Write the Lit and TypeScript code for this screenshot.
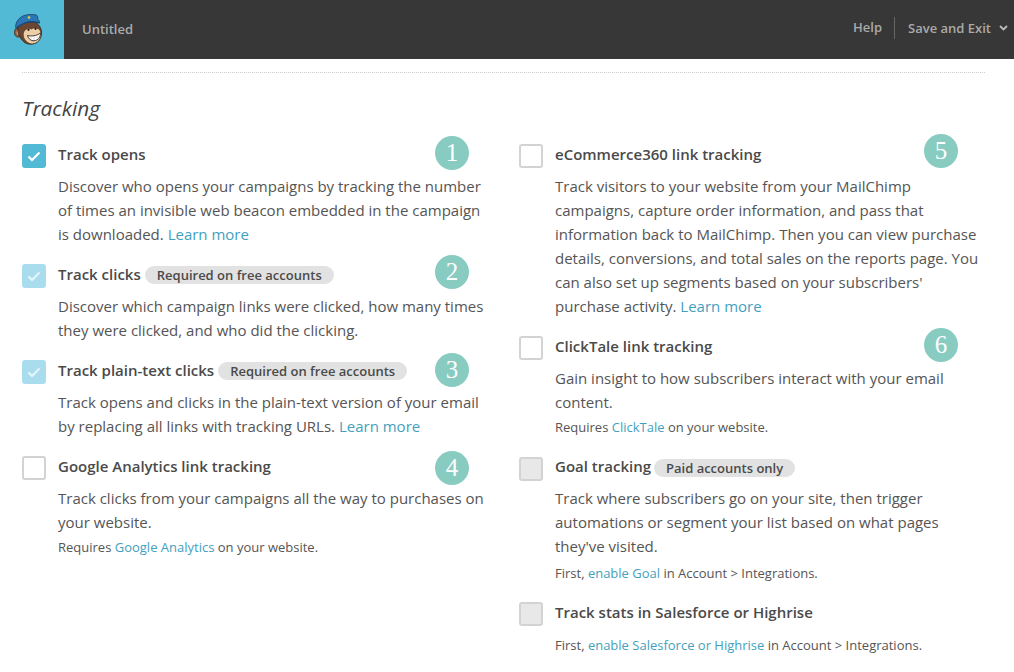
import { LitElement, html, css, svg } from "lit";
import { customElement } from "lit/decorators.js";

type Item = {
  title: string;
  state: "on" | "locked" | "off" | "disabled";
  pill?: string;
  body: unknown;
  note?: unknown;
  num?: number;
  cls: string;
};

const left: Item[] = [
  { title: "Track opens", state: "on", num: 1, cls: "h1",
    body: html`Discover who opens your campaigns by tracking the number of times an invisible web beacon embedded in the campaign is downloaded. <a>Learn more</a>` },
  { title: "Track clicks", state: "locked", pill: "Required on free accounts", num: 2, cls: "h2",
    body: html`Discover which campaign links were clicked, how many times they were clicked, and who did the clicking.` },
  { title: "Track plain-text clicks", state: "locked", pill: "Required on free accounts", num: 3, cls: "h3",
    body: html`Track opens and clicks in the plain-text version of your email by replacing all links with tracking URLs. <a>Learn more</a>` },
  { title: "Google Analytics link tracking", state: "off", num: 4, cls: "h4",
    body: html`Track clicks from your campaigns all the way to purchases on your website.`,
    note: html`Requires <a>Google Analytics</a> on your website.` },
];

const right: Item[] = [
  { title: "eCommerce360 link tracking", state: "off", num: 5, cls: "h5",
    body: html`Track visitors to your website from your MailChimp campaigns, capture order information, and pass that information back to MailChimp. Then you can view purchase details, conversions, and total sales on the reports page. You can also set up segments based on your subscribers' purchase activity. <a>Learn more</a>` },
  { title: "ClickTale link tracking", state: "off", num: 6, cls: "h6",
    body: html`Gain insight to how subscribers interact with your email content.`,
    note: html`Requires <a>ClickTale</a> on your website.` },
  { title: "Goal tracking", state: "disabled", pill: "Paid accounts only", cls: "h7",
    body: html`Track where subscribers go on your site, then trigger automations or segment your list based on what pages they've visited.`,
    note: html`First, <a>enable Goal</a> in Account &gt; Integrations.` },
  { title: "Track stats in Salesforce or Highrise", state: "disabled", cls: "h8",
    body: null,
    note: html`First, <a>enable Salesforce or Highrise</a> in Account &gt; Integrations.` },
];

const logo = svg`<svg width="29" height="31" viewBox="0 0 29 31" aria-hidden="true">
  <ellipse cx="4" cy="18.500" rx="3.600" ry="4.600" fill="#8d5f40" stroke="#3b2a20" stroke-width=".8"/>
  <ellipse cx="4.300" cy="18.500" rx="1.700" ry="2.500" fill="#dcae85"/>
  <path d="M4 13C6 8 11 6 17 7c6 1 10 5 10.500 11 .3 5-2 9-5.500 11-4 2-9 1.500-12-1C6.500 25 3 20 4 13z" fill="#6b4630" stroke="#33241b" stroke-width=".8"/>
  <path d="M10 18c2-3 5-4 7.500-2.500 2.500-2 7-1.500 8.500 1.500 1.500 4 .5 8-2.500 10.500-3 2.500-8 2.500-10.500 0-3-2.500-4-6-3-9.500z" fill="#eccfa6"/>
  <path d="M13.500 21.500c4 1 9 .5 13-2.500 .2 4-2.500 7.500-6.500 7.800-3.200.2-5.500-2-6.500-5.300z" fill="#fff" stroke="#33241b" stroke-width=".9"/>
  <path d="M17 22v3.500M20 22v4M23 21v3.500" stroke="#bbb" stroke-width=".5"/>
  <circle cx="14.500" cy="15.800" r="1.100" fill="#1d1512"/><circle cx="21.500" cy="14.800" r="1.100" fill="#1d1512"/>
  <path d="M1.800 14.500C1 9 4 4.500 9 2c4-1.800 9-2 13-1 1.500.5 2 2 1.500 4 1.500 1 2 2.500 2 4-7-3-16-1.500-23.700 5.500z" fill="#2a77b8" stroke="#1b3f63" stroke-width=".8"/>
  <path d="M3 13.500C9 8.500 17 6.800 25.500 9" fill="none" stroke="#174a78" stroke-width="1.200"/>
  <circle cx="15" cy="3.500" r="1.300" fill="#e8c84a"/>
</svg>`;

@customElement("app-root")
export class AppRoot extends LitElement {
  static styles = css`
    :host { display: block; width: 1014px; height: 672px; overflow: hidden; background: #fff;
      font-family: "Open Sans", sans-serif; color: #555; }
    .top { height: 59px; background: #373737; display: flex; align-items: center; color: #aaa;
      font-size: 13px; font-weight: 600; }
    .brand { width: 64px; height: 59px; background: #52bad5; display: flex; align-items: center; }
    .brand svg { margin-left: 14px; }
    .name { margin-left: 18px; margin-bottom: 2px; flex: 1; }
    .help { padding-right: 12px; height: 22px; line-height: 21px; border-right: 1px solid #666; margin-bottom: 4px; }
    .save { padding-left: 13px; padding-right: 6px; display: flex; align-items: center; gap: 8px; margin-bottom: 4px; }
    .main { margin: 13px 29px 0 22px; border-top: 1px dotted #ccc; }
    h2 { margin: 21px 0 0; height: 29px; font-size: 20.800px; line-height: 29px; font-style: italic; font-weight: 400; color: #444; }
    .cols { display: grid; grid-template-columns: 497px 1fr; margin-top: 20px; }
    .item { position: relative; display: flex; gap: 12px; }
    .box { width: 24px; height: 24px; box-sizing: border-box; border-radius: 3px; flex: none; margin-top: 1px;
      display: flex; align-items: center; justify-content: center; }
    .on { background: #52bad5; }
    .locked { background: #a9dded; }
    .off { border: 2px solid #d3d3d3; background: #fff; }
    .disabled { border: 2px solid #d3d3d3; background: #e8e8e8; }
    .head { display: flex; align-items: center; height: 24px; margin-top: -1px; font-size: 15px; font-weight: 600; color: #4a4a4a; white-space: nowrap; }
    .pill { margin-left: 4px; margin-top: 2px; height: 18px; line-height: 18px; padding: 0 12px; border-radius: 9px; background: #e2e2e2;
      font-size: 13px; color: #4a4a4a; }
    .body { width: 430px; margin-top: 8px; font-size: 15px; line-height: 24px; color: #555; }
    .spacer { height: 8px; }
    .note { font-size: 13px; line-height: 24px; margin-top: 1px; color: #555; white-space: nowrap; }
    a { color: #449fbe; }
    .num { position: absolute; top: -7px; width: 34px; height: 34px; border-radius: 50%; background: #88cbc1; color: #fff;
      font-family: "Liberation Serif", serif; font-size: 25px; line-height: 34px; text-align: center; }
    .left .num { left: 413px; }
    .right .num { left: 405px; }
    .h1 { height: 120px; } .h2 { height: 96px; } .h3 { height: 96px; } .h4 { height: 100px; }
    .h5 { height: 192px; } .h6 { height: 120px; } .h7 { height: 146px; } .h8 { height: 60px; }
    .h2 .num { top: -8px; } .h3 .num { top: -6px; } .h4 .num { top: -4px; } .h5 .num { top: -9px; }
    .h7 .box { margin-top: 2px; }
    .h7 .pill { margin-left: 3px; margin-top: 4px; }
    .h7 .note { margin-top: 3px; }
  `;

  private row(i: Item) {
    return html`<div class="item ${i.cls}">
      <div class="box ${i.state}">
        ${i.state === "on" || i.state === "locked"
          ? html`<svg width="14" height="11" viewBox="0 0 14 11"><path d="M1.500 5.500 5 9 12.500 1.500" fill="none" stroke="${i.state === "on" ? "#fff" : "#e4f5fa"}" stroke-width="2.200"/></svg>`
          : null}
      </div>
      <div>
        <div class="head">${i.title}${i.pill ? html`<span class="pill">${i.pill}</span>` : null}</div>
        ${i.body ? html`<div class="body">${i.body}</div>` : html`<div class="spacer"></div>`}
        ${i.note ? html`<div class="note">${i.note}</div>` : null}
      </div>
      ${i.num ? html`<div class="num">${i.num}</div>` : null}
    </div>`;
  }

  render() {
    return html`
      <div class="top">
        <div class="brand">${logo}</div>
        <div class="name">Untitled</div>
        <div class="help">Help</div>
        <div class="save">Save and Exit
          <svg width="9" height="6" viewBox="0 0 9 6"><path d="M1 1l3.500 3.500L8 1" fill="none" stroke="#bbb" stroke-width="1.800"/></svg>
        </div>
      </div>
      <div class="main">
        <h2>Tracking</h2>
        <div class="cols">
          <div class="left">${left.map((i) => this.row(i))}</div>
          <div class="right">${right.map((i) => this.row(i))}</div>
        </div>
      </div>`;
  }
}
